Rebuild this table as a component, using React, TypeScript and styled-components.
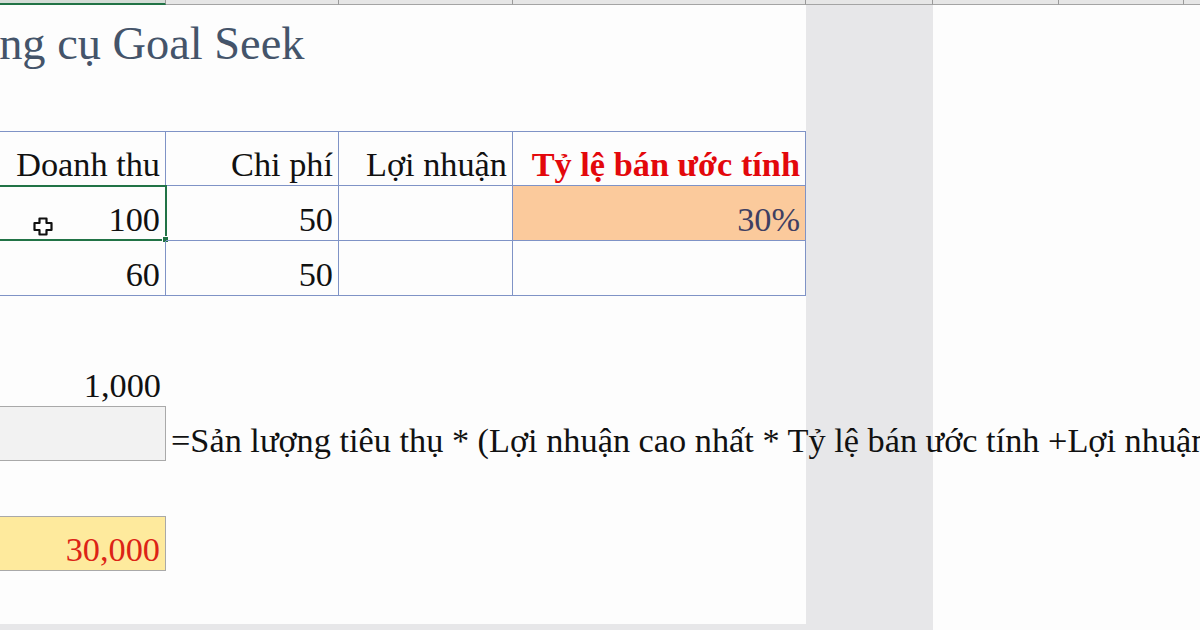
import React from "react";
import styled, { createGlobalStyle, css } from "styled-components";

const Global = createGlobalStyle`
  html, body { margin: 0; padding: 0; }
  body { width: 1200px; height: 630px; overflow: hidden; background: #fff; }
`;

const COLS = [226, 173, 174, 293, 127, 126, 125, 220];
const GRID = "226px 173px 174px 293px";
const serif = `"Liberation Serif", "Times New Roman", serif`;

const Root = styled.div`
  width: 1200px;
  height: 630px;
  overflow: hidden;
  background: linear-gradient(to right, #e7e7e9 0, #e7e7e9 933px, #fdfdfd 933px);
`;

const Sheet = styled.div`
  margin-left: -60px;
  width: 1260px;
`;

const HeaderBar = styled.div`
  display: flex;
  height: 5px;
`;

const ColHead = styled.div<{ $w: number; $active?: boolean }>`
  box-sizing: border-box;
  flex: 0 0 ${(p) => p.$w}px;
  height: 5px;
  background: ${(p) => (p.$active ? "#d4dcd6" : "#e6e6e6")};
  border-right: 1px solid #9a9a9a;
  border-bottom: ${(p) => (p.$active ? "2px solid #217346" : "1px solid #a4a4a4")};
`;

const Page = styled.div`
  width: 866px;
  height: 619px;
  background: #fdfdfd;
  display: flex;
  flex-direction: column;
  font-family: ${serif};
  color: #111;
`;

const Spacer = styled.div<{ $h: number }>`
  flex: 0 0 ${(p) => p.$h}px;
`;

const Title = styled.div`
  flex: 0 0 55px;
  box-sizing: border-box;
  padding-left: 5px;
  font-size: 46.4px;
  line-height: 46px;
  color: #44546a;
  white-space: nowrap;
`;

const Row = styled.div`
  display: grid;
  grid-template-columns: ${GRID};
  height: 55px;
  flex: 0 0 55px;
`;

type CellProps = {
  $border?: "table" | "box" | "none";
  $top?: boolean;
  $bg?: string;
  $color?: string;
  $bold?: boolean;
  $left?: boolean;
};

const Cell = styled.div<CellProps>`
  box-sizing: border-box;
  position: relative;
  display: flex;
  align-items: flex-end;
  justify-content: ${(p) => (p.$left ? "flex-start" : "flex-end")};
  padding: 0 5px 4px 5px;
  font-size: 34.3px;
  line-height: 33px;
  white-space: nowrap;
  background: ${(p) => p.$bg ?? "transparent"};
  color: ${(p) => p.$color ?? "#111"};
  font-weight: ${(p) => (p.$bold ? 700 : 400)};
  ${(p) =>
    p.$border === "table" &&
    css`
      border-right: 1px solid #7f93c6;
      border-bottom: 1px solid #7f93c6;
      ${p.$top ? "border-top: 1px solid #7f93c6;" : ""}
    `}
  ${(p) =>
    p.$border === "box" &&
    css`
      border: 1px solid #a9a9a9;
    `}
`;

const Selection = styled.div`
  position: absolute;
  top: -1px;
  left: 0;
  right: -2px;
  bottom: -1px;
  border: 2px solid #217346;
  pointer-events: none;
`;

const FillHandle = styled.div`
  position: absolute;
  right: -4px;
  bottom: -4px;
  width: 5px;
  height: 5px;
  background: #217346;
  border: 1px solid #fdfdfd;
`;

const Cursor = styled.svg`
  position: absolute;
  left: 93px;
  top: 31px;
`;

const CrossCursor = () => (
  <Cursor width="20" height="19" viewBox="0 0 20 19">
    <path
      d="M6.5 1.5 H13.5 V6 H18.5 V13 H13.5 V17.5 H6.5 V13 H1.5 V6 H6.5 Z"
      fill="#fff"
      stroke="#111"
      strokeWidth="2.2"
      strokeLinejoin="round"
    />
  </Cursor>
);

const headers = ["Doanh thu", "Chi phí", "Lợi nhuận"];

export default function App() {
  return (
    <Root>
      <Global />
      <Sheet>
        <HeaderBar>
          {COLS.map((w, i) => (
            <ColHead key={i} $w={w} $active={i === 0} />
          ))}
        </HeaderBar>
        <Page>
          <Spacer $h={16} />
          <Title>Công cụ Goal Seek</Title>
          <Spacer $h={55} />
          <Row>
            {headers.map((h) => (
              <Cell key={h} $border="table" $top>
                {h}
              </Cell>
            ))}
            <Cell $border="table" $top $bold $color="#e3080c">
              Tỷ lệ bán ước tính
            </Cell>
          </Row>
          <Row>
            <Cell $border="table">
              100
              <CrossCursor />
              <Selection>
                <FillHandle />
              </Selection>
            </Cell>
            <Cell $border="table">50</Cell>
            <Cell $border="table" />
            <Cell $border="table" $bg="#fbca9c" $color="#3f3f62">
              30%
            </Cell>
          </Row>
          <Row>
            <Cell $border="table">60</Cell>
            <Cell $border="table">50</Cell>
            <Cell $border="table" />
            <Cell $border="table" />
          </Row>
          <Spacer $h={55} />
          <Row>
            <Cell>1,000</Cell>
          </Row>
          <Row>
            <Cell $border="box" $bg="#f2f2f2" />
            <Cell $left>
              =Sản lượng tiêu thụ * (Lợi nhuận cao nhất * Tỷ lệ bán ước tính +Lợi nhuận
              thấp nhất)
            </Cell>
          </Row>
          <Spacer $h={55} />
          <Row>
            <Cell $border="box" $bg="#feea9d" $color="#dc2416">
              30,000
            </Cell>
          </Row>
        </Page>
      </Sheet>
    </Root>
  );
}
